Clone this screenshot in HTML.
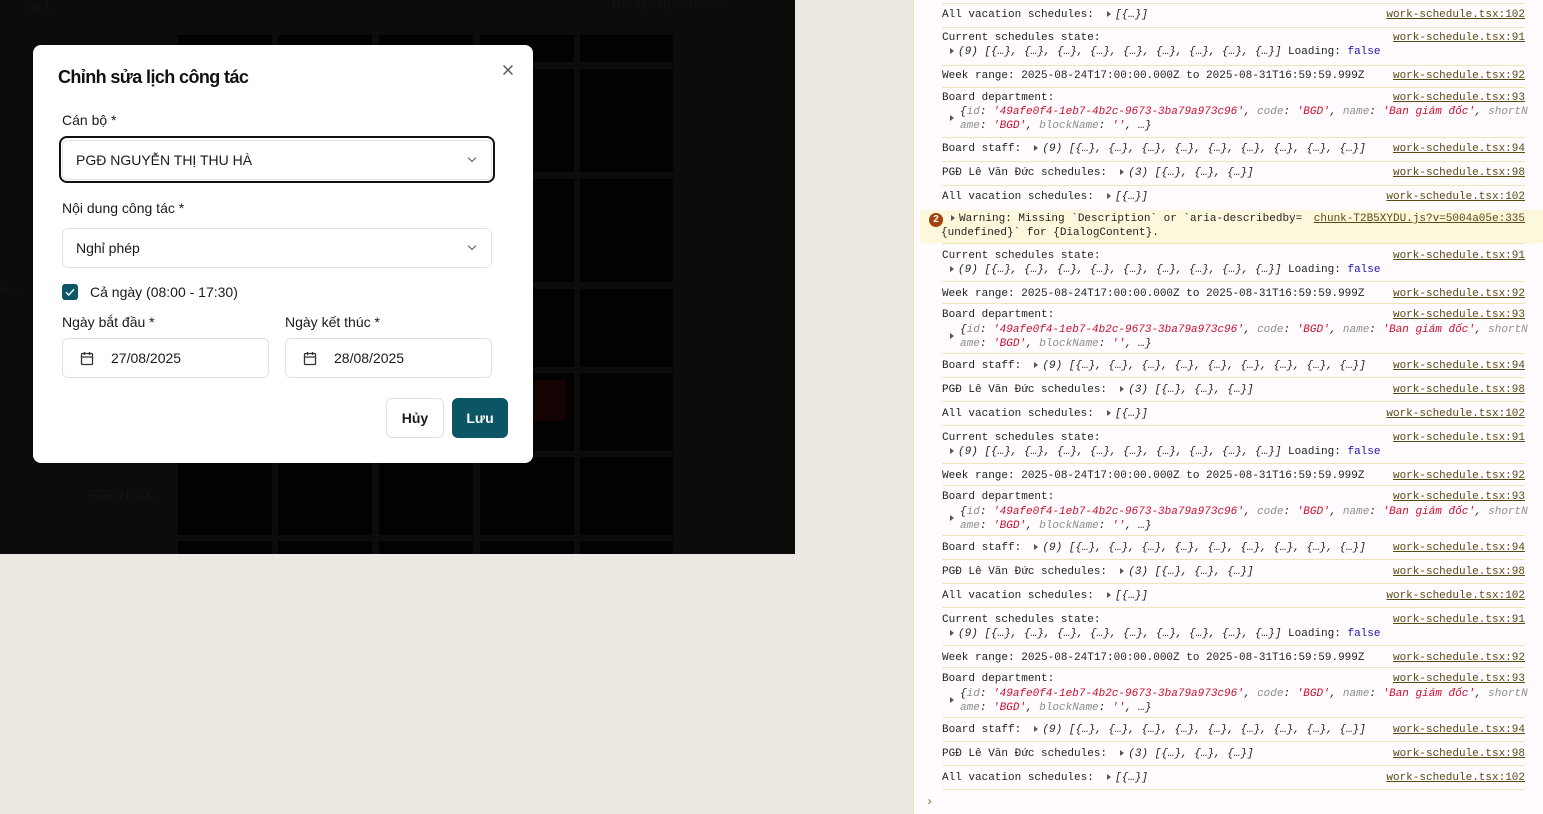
<!DOCTYPE html>
<html><head><meta charset="utf-8"><style>
*{box-sizing:border-box;margin:0;padding:0}
body{width:1543px;height:814px;background:#ece8e2;position:relative;overflow:hidden;font-family:"Liberation Sans","Noto Sans CJK SC",sans-serif}
#app{position:absolute;left:0;top:0;width:795px;height:554px;background:#0c0c0c;overflow:hidden}
.cell{position:absolute;background:#020202}
.ft{position:absolute;color:#141414;font-size:14px}
#modal{position:absolute;left:33px;top:45px;width:500px;height:418px;background:#fff;border-radius:8px}
.lbl{position:absolute;font-size:14px;color:#1a1a1a}
.box{position:absolute;border:1px solid #e2e2e2;border-radius:6px;background:#fff;font-size:14px;color:#1a1a1a}
.chev{position:absolute;right:14px;top:50%;margin-top:-4px}
#con{position:absolute;left:913px;top:0;width:630px;height:814px;background:#fffbfe;border-left:1px solid #ede3b0;font-family:"Liberation Mono","DejaVu Sans Mono",monospace;font-size:11px;color:#1f1f1f}
.r{position:absolute;left:28px;width:583px;border-top:1px solid #efe6b2}
.t{position:absolute;left:0;white-space:pre}
.lk{position:absolute;right:0;color:#5a4a14;text-decoration:underline;white-space:pre}
.i{font-style:italic}
.k{color:#8d8d8d;font-style:italic}
.s{color:#c8102e;font-style:italic}
.b{color:#1a1aa6}
.tri{display:inline-block;width:0;height:0;border-left:4px solid #555;border-top:3.5px solid transparent;border-bottom:3.5px solid transparent;margin-right:4px;vertical-align:0}
</style></head><body>
<div id="app">
 <div class="ft" style="left:28px;top:0;font-size:12px">ch 1</div>
 <div class="ft" style="left:610px;top:-4px;font-size:12px">Thư ký cấp Chi nhánh</div>
 <div class="ft" style="left:0;top:283px;font-size:12px">họp</div>
 <div class="ft" style="left:88px;top:487px;font-size:13px">PGĐ NGÔ...</div>
 <div class="cell" style="left:178px;top:35px;width:94px;height:27px"></div>
 <div class="cell" style="left:278px;top:35px;width:94px;height:27px"></div>
 <div class="cell" style="left:379px;top:35px;width:94px;height:27px"></div>
 <div class="cell" style="left:480px;top:35px;width:94px;height:27px"></div>
 <div class="cell" style="left:580px;top:35px;width:93px;height:27px"></div>
 <div class="cell" style="left:178px;top:69px;width:94px;height:103px"></div>
 <div class="cell" style="left:278px;top:69px;width:94px;height:103px"></div>
 <div class="cell" style="left:379px;top:69px;width:94px;height:103px"></div>
 <div class="cell" style="left:480px;top:69px;width:94px;height:103px"></div>
 <div class="cell" style="left:580px;top:69px;width:93px;height:103px"></div>
 <div class="cell" style="left:178px;top:179px;width:94px;height:103px"></div>
 <div class="cell" style="left:278px;top:179px;width:94px;height:103px"></div>
 <div class="cell" style="left:379px;top:179px;width:94px;height:103px"></div>
 <div class="cell" style="left:480px;top:179px;width:94px;height:103px"></div>
 <div class="cell" style="left:580px;top:179px;width:93px;height:103px"></div>
 <div class="cell" style="left:178px;top:289px;width:94px;height:78px"></div>
 <div class="cell" style="left:278px;top:289px;width:94px;height:78px"></div>
 <div class="cell" style="left:379px;top:289px;width:94px;height:78px"></div>
 <div class="cell" style="left:480px;top:289px;width:94px;height:78px"></div>
 <div class="cell" style="left:580px;top:289px;width:93px;height:78px"></div>
 <div class="cell" style="left:178px;top:373px;width:94px;height:78px"></div>
 <div class="cell" style="left:278px;top:373px;width:94px;height:78px"></div>
 <div class="cell" style="left:379px;top:373px;width:94px;height:78px"></div>
 <div class="cell" style="left:480px;top:373px;width:94px;height:78px"></div>
 <div class="cell" style="left:580px;top:373px;width:93px;height:78px"></div>
 <div class="cell" style="left:530px;top:380px;width:36px;height:41px;background:#140303"></div>
 <div class="cell" style="left:178px;top:457px;width:94px;height:78px"></div>
 <div class="cell" style="left:278px;top:457px;width:94px;height:78px"></div>
 <div class="cell" style="left:379px;top:457px;width:94px;height:78px"></div>
 <div class="cell" style="left:480px;top:457px;width:94px;height:78px"></div>
 <div class="cell" style="left:580px;top:457px;width:93px;height:78px"></div>
 <div class="cell" style="left:178px;top:541px;width:94px;height:20px"></div>
 <div class="cell" style="left:278px;top:541px;width:94px;height:20px"></div>
 <div class="cell" style="left:379px;top:541px;width:94px;height:20px"></div>
 <div class="cell" style="left:480px;top:541px;width:94px;height:20px"></div>
 <div class="cell" style="left:580px;top:541px;width:93px;height:20px"></div>
</div>

<div id="modal">
 <div style="position:absolute;left:25px;top:22px;font-size:18px;font-weight:bold;color:#111;letter-spacing:-0.6px">Chỉnh sửa lịch công tác</div>
 <svg style="position:absolute;left:469px;top:19px" width="12" height="12" viewBox="0 0 12 12"><path d="M1.5 1.5L10.5 10.5M10.5 1.5L1.5 10.5" stroke="#555" stroke-width="1.4"/></svg>
 <div class="lbl" style="left:29px;top:67px">Cán bộ *</div>
 <div style="position:absolute;left:26px;top:91px;width:436px;height:47px;border:2px solid #111;border-radius:8px"></div>
 <div class="box" style="left:29px;top:95px;width:430px;height:40px;line-height:38px;padding-left:13px">PGĐ NGUYỄN THỊ THU HÀ<svg class="chev" width="10" height="7" viewBox="0 0 10 7"><path d="M1 1.5L5 5.5L9 1.5" stroke="#666" stroke-width="1.2" fill="none"/></svg></div>
 <div class="lbl" style="left:29px;top:155px">Nội dung công tác *</div>
 <div class="box" style="left:29px;top:183px;width:430px;height:40px;line-height:38px;padding-left:13px">Nghỉ phép<svg class="chev" width="10" height="7" viewBox="0 0 10 7"><path d="M1 1.5L5 5.5L9 1.5" stroke="#666" stroke-width="1.2" fill="none"/></svg></div>
 <div style="position:absolute;left:29px;top:239px;width:16px;height:16px;background:#0e5866;border-radius:3px"><svg width="16" height="16" viewBox="0 0 16 16"><path d="M4 8.3L6.8 11L12 5.3" stroke="#fff" stroke-width="1.4" fill="none"/></svg></div>
 <div class="lbl" style="left:57px;top:239px">Cả ngày (08:00 - 17:30)</div>
 <div class="lbl" style="left:29px;top:269px">Ngày bắt đầu *</div>
 <div class="lbl" style="left:252px;top:269px">Ngày kết thúc *</div>
 <div class="box" style="left:29px;top:293px;width:207px;height:40px;line-height:38px;padding-left:48px"><svg style="position:absolute;left:17px;top:12px" width="14" height="15" viewBox="0 0 14 15"><rect x="1.5" y="2.5" width="11" height="11" rx="1" stroke="#333" stroke-width="1.3" fill="none"/><path d="M1.5 6h11M4.5 1v3M9.5 1v3" stroke="#333" stroke-width="1.3"/></svg>27/08/2025</div>
 <div class="box" style="left:252px;top:293px;width:207px;height:40px;line-height:38px;padding-left:48px"><svg style="position:absolute;left:17px;top:12px" width="14" height="15" viewBox="0 0 14 15"><rect x="1.5" y="2.5" width="11" height="11" rx="1" stroke="#333" stroke-width="1.3" fill="none"/><path d="M1.5 6h11M4.5 1v3M9.5 1v3" stroke="#333" stroke-width="1.3"/></svg>28/08/2025</div>
 <div class="box" style="left:353px;top:353px;width:58px;height:40px;line-height:38px;text-align:center;font-weight:bold;font-size:14px">Hủy</div>
 <div style="position:absolute;left:419px;top:353px;width:56px;height:40px;line-height:40px;text-align:center;background:#0b5564;color:#fff;border-radius:6px;font-weight:bold;font-size:14px">Lưu</div>
</div>

<div id="con">
 <div class="r" style="top:3px;height:24px"><span class="t" style="top:5px">All vacation schedules:  <span class="tri"></span><span class="i">[{…}]</span></span><span class="lk" style="top:5px">work-schedule.tsx:102</span></div>
 <div class="r" style="top:27px;height:38px"><span class="t" style="top:4px">Current schedules state:</span><span class="t" style="top:18px;left:8px"><span class="tri"></span><span class="i">(9) [{…}, {…}, {…}, {…}, {…}, {…}, {…}, {…}, {…}]</span> Loading: <span class="b">false</span></span><span class="lk" style="top:4px">work-schedule.tsx:91</span></div>
 <div class="r" style="top:65px;height:22px"><span class="t" style="top:4px">Week range: 2025-08-24T17:00:00.000Z to 2025-08-31T16:59:59.999Z</span><span class="lk" style="top:4px">work-schedule.tsx:92</span></div>
 <div class="r" style="top:87px;height:50px"><span class="t" style="top:4px">Board department:</span><span class="t" style="top:18px;left:18px"><span class="i">{<span class="k">id</span>: <span class="s">'49afe0f4-1eb7-4b2c-9673-3ba79a973c96'</span>, <span class="k">code</span>: <span class="s">'BGD'</span>, <span class="k">name</span>: <span class="s">'Ban giám đốc'</span>, <span class="k">shortN</span></span></span><span class="t" style="top:25px;left:8px"><span class="tri"></span></span><span class="t" style="top:32px;left:18px"><span class="i"><span class="k">ame</span>: <span class="s">'BGD'</span>, <span class="k">blockName</span>: <span class="s">''</span>, …}</span></span><span class="lk" style="top:4px">work-schedule.tsx:93</span></div>
 <div class="r" style="top:137px;height:24px"><span class="t" style="top:5px">Board staff:  <span class="tri"></span><span class="i">(9) [{…}, {…}, {…}, {…}, {…}, {…}, {…}, {…}, {…}]</span></span><span class="lk" style="top:5px">work-schedule.tsx:94</span></div>
 <div class="r" style="top:161px;height:24px"><span class="t" style="top:5px">PGĐ Lê Văn Đức schedules:  <span class="tri"></span><span class="i">(3) [{…}, {…}, {…}]</span></span><span class="lk" style="top:5px">work-schedule.tsx:98</span></div>
 <div class="r" style="top:185px;height:24px"><span class="t" style="top:5px">All vacation schedules:  <span class="tri"></span><span class="i">[{…}]</span></span><span class="lk" style="top:5px">work-schedule.tsx:102</span></div>
 <div style="position:absolute;left:6px;top:210px;width:624px;height:33px;background:#fdf8dc"><span style="position:absolute;left:9px;top:3px;width:14px;height:14px;border-radius:7px;background:#a3410f;color:#fff;font-size:10px;line-height:14px;text-align:center;font-family:'Liberation Sans',sans-serif;font-weight:bold">2</span><span class="t" style="top:3px;left:31px"><span class="tri"></span>Warning: Missing `Description` or `aria-describedby=</span><span class="t" style="top:17px;left:21px">{undefined}` for {DialogContent}.</span><span class="lk" style="top:3px;right:19px">chunk-T2B5XYDU.js?v=5004a05e:335</span></div>
 <div class="r" style="top:243px;height:38px"><span class="t" style="top:6px">Current schedules state:</span><span class="t" style="top:20px;left:8px"><span class="tri"></span><span class="i">(9) [{…}, {…}, {…}, {…}, {…}, {…}, {…}, {…}, {…}]</span> Loading: <span class="b">false</span></span><span class="lk" style="top:6px">work-schedule.tsx:91</span></div>
 <div class="r" style="top:281px;height:22px"><span class="t" style="top:6px">Week range: 2025-08-24T17:00:00.000Z to 2025-08-31T16:59:59.999Z</span><span class="lk" style="top:6px">work-schedule.tsx:92</span></div>
 <div class="r" style="top:303px;height:50px"><span class="t" style="top:5px">Board department:</span><span class="t" style="top:20px;left:18px"><span class="i">{<span class="k">id</span>: <span class="s">'49afe0f4-1eb7-4b2c-9673-3ba79a973c96'</span>, <span class="k">code</span>: <span class="s">'BGD'</span>, <span class="k">name</span>: <span class="s">'Ban giám đốc'</span>, <span class="k">shortN</span></span></span><span class="t" style="top:27px;left:8px"><span class="tri"></span></span><span class="t" style="top:34px;left:18px"><span class="i"><span class="k">ame</span>: <span class="s">'BGD'</span>, <span class="k">blockName</span>: <span class="s">''</span>, …}</span></span><span class="lk" style="top:5px">work-schedule.tsx:93</span></div>
 <div class="r" style="top:353px;height:24px"><span class="t" style="top:6px">Board staff:  <span class="tri"></span><span class="i">(9) [{…}, {…}, {…}, {…}, {…}, {…}, {…}, {…}, {…}]</span></span><span class="lk" style="top:6px">work-schedule.tsx:94</span></div>
 <div class="r" style="top:377px;height:24px"><span class="t" style="top:6px">PGĐ Lê Văn Đức schedules:  <span class="tri"></span><span class="i">(3) [{…}, {…}, {…}]</span></span><span class="lk" style="top:6px">work-schedule.tsx:98</span></div>
 <div class="r" style="top:401px;height:24px"><span class="t" style="top:6px">All vacation schedules:  <span class="tri"></span><span class="i">[{…}]</span></span><span class="lk" style="top:6px">work-schedule.tsx:102</span></div>
 <div class="r" style="top:425px;height:38px"><span class="t" style="top:6px">Current schedules state:</span><span class="t" style="top:20px;left:8px"><span class="tri"></span><span class="i">(9) [{…}, {…}, {…}, {…}, {…}, {…}, {…}, {…}, {…}]</span> Loading: <span class="b">false</span></span><span class="lk" style="top:6px">work-schedule.tsx:91</span></div>
 <div class="r" style="top:463px;height:22px"><span class="t" style="top:6px">Week range: 2025-08-24T17:00:00.000Z to 2025-08-31T16:59:59.999Z</span><span class="lk" style="top:6px">work-schedule.tsx:92</span></div>
 <div class="r" style="top:485px;height:50px"><span class="t" style="top:5px">Board department:</span><span class="t" style="top:20px;left:18px"><span class="i">{<span class="k">id</span>: <span class="s">'49afe0f4-1eb7-4b2c-9673-3ba79a973c96'</span>, <span class="k">code</span>: <span class="s">'BGD'</span>, <span class="k">name</span>: <span class="s">'Ban giám đốc'</span>, <span class="k">shortN</span></span></span><span class="t" style="top:27px;left:8px"><span class="tri"></span></span><span class="t" style="top:34px;left:18px"><span class="i"><span class="k">ame</span>: <span class="s">'BGD'</span>, <span class="k">blockName</span>: <span class="s">''</span>, …}</span></span><span class="lk" style="top:5px">work-schedule.tsx:93</span></div>
 <div class="r" style="top:535px;height:24px"><span class="t" style="top:6px">Board staff:  <span class="tri"></span><span class="i">(9) [{…}, {…}, {…}, {…}, {…}, {…}, {…}, {…}, {…}]</span></span><span class="lk" style="top:6px">work-schedule.tsx:94</span></div>
 <div class="r" style="top:559px;height:24px"><span class="t" style="top:6px">PGĐ Lê Văn Đức schedules:  <span class="tri"></span><span class="i">(3) [{…}, {…}, {…}]</span></span><span class="lk" style="top:6px">work-schedule.tsx:98</span></div>
 <div class="r" style="top:583px;height:24px"><span class="t" style="top:6px">All vacation schedules:  <span class="tri"></span><span class="i">[{…}]</span></span><span class="lk" style="top:6px">work-schedule.tsx:102</span></div>
 <div class="r" style="top:607px;height:38px"><span class="t" style="top:6px">Current schedules state:</span><span class="t" style="top:20px;left:8px"><span class="tri"></span><span class="i">(9) [{…}, {…}, {…}, {…}, {…}, {…}, {…}, {…}, {…}]</span> Loading: <span class="b">false</span></span><span class="lk" style="top:6px">work-schedule.tsx:91</span></div>
 <div class="r" style="top:645px;height:22px"><span class="t" style="top:6px">Week range: 2025-08-24T17:00:00.000Z to 2025-08-31T16:59:59.999Z</span><span class="lk" style="top:6px">work-schedule.tsx:92</span></div>
 <div class="r" style="top:667px;height:50px"><span class="t" style="top:5px">Board department:</span><span class="t" style="top:20px;left:18px"><span class="i">{<span class="k">id</span>: <span class="s">'49afe0f4-1eb7-4b2c-9673-3ba79a973c96'</span>, <span class="k">code</span>: <span class="s">'BGD'</span>, <span class="k">name</span>: <span class="s">'Ban giám đốc'</span>, <span class="k">shortN</span></span></span><span class="t" style="top:27px;left:8px"><span class="tri"></span></span><span class="t" style="top:34px;left:18px"><span class="i"><span class="k">ame</span>: <span class="s">'BGD'</span>, <span class="k">blockName</span>: <span class="s">''</span>, …}</span></span><span class="lk" style="top:5px">work-schedule.tsx:93</span></div>
 <div class="r" style="top:717px;height:24px"><span class="t" style="top:6px">Board staff:  <span class="tri"></span><span class="i">(9) [{…}, {…}, {…}, {…}, {…}, {…}, {…}, {…}, {…}]</span></span><span class="lk" style="top:6px">work-schedule.tsx:94</span></div>
 <div class="r" style="top:741px;height:24px"><span class="t" style="top:6px">PGĐ Lê Văn Đức schedules:  <span class="tri"></span><span class="i">(3) [{…}, {…}, {…}]</span></span><span class="lk" style="top:6px">work-schedule.tsx:98</span></div>
 <div class="r" style="top:765px;height:24px"><span class="t" style="top:6px">All vacation schedules:  <span class="tri"></span><span class="i">[{…}]</span></span><span class="lk" style="top:6px">work-schedule.tsx:102</span></div>
 <div class="r" style="top:789px;height:1px"></div>
 <span style="position:absolute;left:12px;top:795px;color:#8a7a2a;font-size:12px">›</span>
</div>
</body></html>
